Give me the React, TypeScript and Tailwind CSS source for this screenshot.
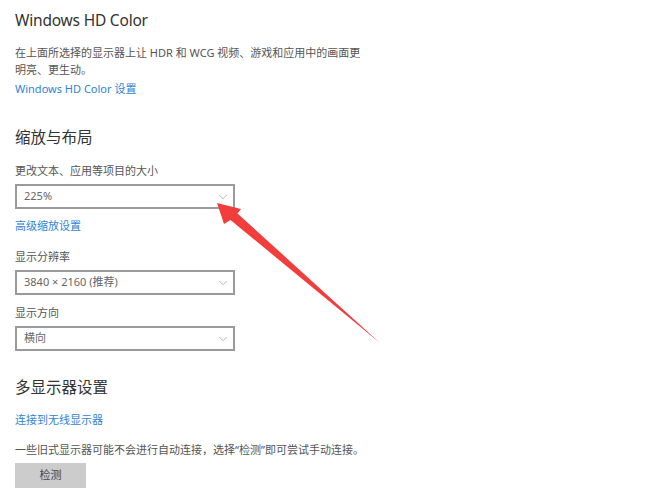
import { ChevronDown } from 'lucide-react';

const font = { fontFamily: '"Noto Sans", "Noto Sans CJK SC", sans-serif' };

const Dropdown = ({ value, className = '' }: { value: string; className?: string }) => (
  <div
    className={`flex items-center justify-between w-[220px] h-[25px] border-2 border-[#9a9a9a] bg-white pl-[7px] pr-[3px] ${className}`}
  >
    <span className="text-[11px] text-[#666]">{value}</span>
    <ChevronDown className="w-[14px] h-[14px] text-[#999]" strokeWidth={1.2} />
  </div>
);

const Arrow = () => (
  <svg className="absolute left-0 top-0 pointer-events-none" width="660" height="495" viewBox="0 0 660 495">
    <polygon
      points="217,203 241,209 237.5,213.5 380,343 230.5,220 224,224"
      fill="#f23d3d"
    />
  </svg>
);

export default function App() {
  return (
    <div className="relative w-[660px] h-[495px] bg-white overflow-hidden" style={font}>
      <div className="flex flex-col pl-[15px]">
        <h2 className="mt-[10px] text-[15.5px] tracking-[-0.2px] leading-[20px] text-[#333]">Windows HD Color</h2>
        <p className="mt-[14px] w-[350px] text-[11px] leading-[17px] text-[#555]">
          在上面所选择的显示器上让 HDR 和 WCG 视频、游戏和应用中的画面更明亮、更生动。
        </p>
        <a className="mt-[2px] text-[11px] leading-[17px] text-[#2f84d6]">Windows HD Color 设置</a>

        <h2 className="mt-[29px] text-[15.5px] leading-[22px] text-[#333]">缩放与布局</h2>
        <div className="mt-[15px] text-[11px] leading-[16px] text-[#555]">更改文本、应用等项目的大小</div>
        <Dropdown value="225%" className="mt-[5px]" />
        <a className="mt-[9px] text-[11px] leading-[16px] text-[#2f84d6]">高级缩放设置</a>

        <div className="mt-[15px] text-[11px] leading-[16px] text-[#555]">显示分辨率</div>
        <Dropdown value="3840 × 2160 (推荐)" className="mt-[5px]" />
        <div className="mt-[10px] text-[11px] leading-[16px] text-[#555]">显示方向</div>
        <Dropdown value="横向" className="mt-[5px]" />

        <h2 className="mt-[25px] text-[15.5px] leading-[22px] text-[#333]">多显示器设置</h2>
        <a className="mt-[14px] text-[11px] leading-[16px] text-[#2f84d6]">连接到无线显示器</a>
        <p className="mt-[14px] text-[11px] leading-[16px] text-[#555]">
          一些旧式显示器可能不会进行自动连接，选择“检测”即可尝试手动连接。
        </p>
        <button className="mt-[5px] w-[71px] h-[25px] bg-[#cccccc] text-[11px] text-[#444]">检测</button>
      </div>
      <Arrow />
    </div>
  );
}
